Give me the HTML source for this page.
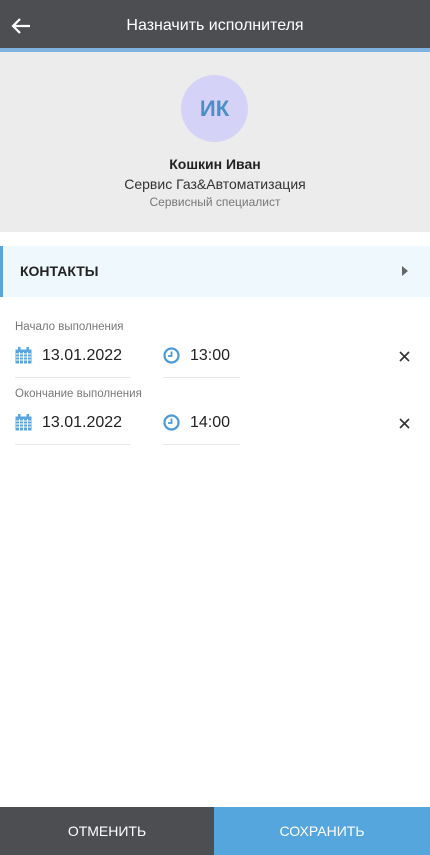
<!DOCTYPE html>
<html><head><meta charset="utf-8"><style>
*{margin:0;padding:0;box-sizing:border-box}
body{width:430px;height:855px;position:relative;background:#fff;font-family:"Liberation Sans",sans-serif;overflow:hidden}
.abs{position:absolute}
.hdr{left:0;top:0;width:430px;height:48px;background:#4d4e52}
.title{left:0;width:430px;top:17px;text-align:center;color:#fff;font-size:16px}
.line{left:0;top:48px;width:430px;height:4px;background:#7fb2de}
.gray{left:0;top:52px;width:430px;height:180px;background:#ececec}
.av{left:181px;top:75px;width:67px;height:67px;border-radius:50%;background:#d4d3f7;color:#4b8ec8;font-weight:bold;font-size:22px;text-align:center;line-height:67px}
.c{left:0;width:430px;text-align:center}
.cont{left:0;top:246px;width:430px;height:51px;background:#eff8fd;border-left:3px solid #5aa5de}
.lbl{font-size:11.5px;color:#777;left:15px}
.val{font-size:16px;color:#222}
.ul{height:1px;background:#e6e6e6}
.btn{top:807px;height:48px;color:#fff;font-size:14px;text-align:center;line-height:48px}
</style></head><body>
<div class="abs hdr"></div>
<svg class="abs" style="left:10px;top:17px" width="22" height="18" viewBox="0 0 22 18"><path d="M20 9H3M10 2L3 9l7 7" stroke="#fff" stroke-width="2.2" fill="none"/></svg>
<div class="abs title">Назначить исполнителя</div>
<div class="abs line"></div>
<div class="abs gray"></div>
<div class="abs av">ИК</div>
<div class="abs c" style="top:156px;font-weight:bold;font-size:14px;color:#222">Кошкин Иван</div>
<div class="abs c" style="top:176px;font-size:14px;color:#333">Сервис Газ&amp;Автоматизация</div>
<div class="abs c" style="top:195px;font-size:12px;color:#777">Сервисный специалист</div>
<div class="abs cont"></div>
<div class="abs" style="left:20px;top:263px;font-weight:bold;font-size:14px;color:#222">КОНТАКТЫ</div>
<svg class="abs" style="left:402px;top:266px" width="6" height="10"><path d="M0 0L6 5L0 10Z" fill="#666"/></svg>

<div class="abs lbl" style="top:321px">Начало выполнения</div>
<div class="abs lbl" style="top:388px">Окончание выполнения</div>

<svg class="abs" style="left:15px;top:347px" width="17" height="17" viewBox="0 0 17 17"><rect x="0.5" y="2.5" width="16" height="14" fill="#5aa5de"/><rect x="3" y="0" width="2.5" height="4" fill="#5aa5de"/><rect x="11.5" y="0" width="2.5" height="4" fill="#5aa5de"/><path d="M1 7H16M1 10H16M1 13H16M4.5 5v12M8.5 5v12M12.5 5v12" stroke="#fff" stroke-width="1"/></svg>
<div class="abs val" style="left:42px;top:347px">13.01.2022</div>
<div class="abs ul" style="left:15px;top:377px;width:115px"></div>
<svg class="abs" style="left:163px;top:347px" width="17" height="17" viewBox="0 0 17 17"><circle cx="8.5" cy="8.5" r="7" stroke="#4b9ad8" stroke-width="2.2" fill="none"/><path d="M8.5 4.5V9H5" stroke="#4b9ad8" stroke-width="1.8" fill="none"/></svg>
<div class="abs val" style="left:190px;top:347px">13:00</div>
<div class="abs ul" style="left:163px;top:377px;width:77px"></div>
<svg class="abs" style="left:399px;top:351px" width="11" height="11"><path d="M1 1L10 10M10 1L1 10" stroke="#333" stroke-width="1.6"/></svg>

<svg class="abs" style="left:15px;top:414px" width="17" height="17" viewBox="0 0 17 17"><rect x="0.5" y="2.5" width="16" height="14" fill="#5aa5de"/><rect x="3" y="0" width="2.5" height="4" fill="#5aa5de"/><rect x="11.5" y="0" width="2.5" height="4" fill="#5aa5de"/><path d="M1 7H16M1 10H16M1 13H16M4.5 5v12M8.5 5v12M12.5 5v12" stroke="#fff" stroke-width="1"/></svg>
<div class="abs val" style="left:42px;top:414px">13.01.2022</div>
<div class="abs ul" style="left:15px;top:444px;width:115px"></div>
<svg class="abs" style="left:163px;top:414px" width="17" height="17" viewBox="0 0 17 17"><circle cx="8.5" cy="8.5" r="7" stroke="#4b9ad8" stroke-width="2.2" fill="none"/><path d="M8.5 4.5V9H5" stroke="#4b9ad8" stroke-width="1.8" fill="none"/></svg>
<div class="abs val" style="left:190px;top:414px">14:00</div>
<div class="abs ul" style="left:163px;top:444px;width:77px"></div>
<svg class="abs" style="left:399px;top:418px" width="11" height="11"><path d="M1 1L10 10M10 1L1 10" stroke="#333" stroke-width="1.6"/></svg>

<div class="abs btn" style="left:0;width:214px;background:#4d4e52">ОТМЕНИТЬ</div>
<div class="abs btn" style="left:214px;width:216px;background:#55a6dc">СОХРАНИТЬ</div>
</body></html>
